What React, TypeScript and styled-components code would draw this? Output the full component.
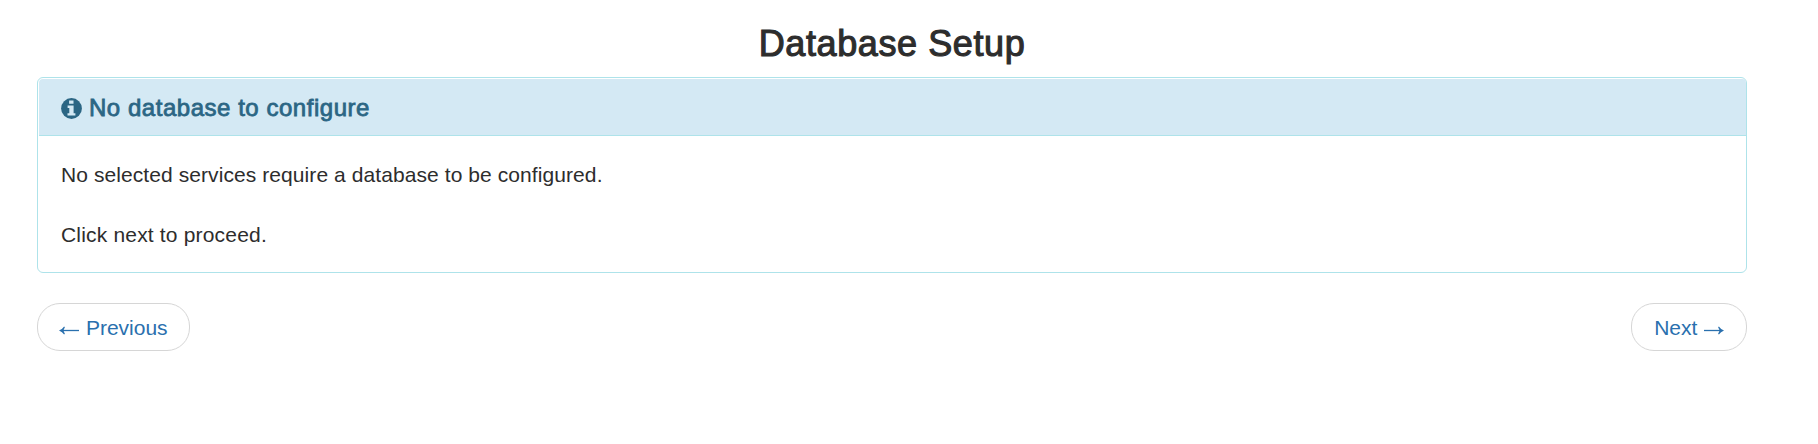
import React from 'react';
import styled, { createGlobalStyle } from 'styled-components';

const GlobalStyle = createGlobalStyle`
  *, *::before, *::after { box-sizing: border-box; }
  body {
    margin: 0;
    background: #fff;
    color: #2d2d2d;
    font-family: "Liberation Sans", Arial, sans-serif;
    font-size: 21px;
    line-height: 30px;
  }
`;

const Page = styled.main`
  padding: 24px 71px 0 37px;
`;

const Title = styled.h3`
  margin: 0 0 13px;
  font-size: 36px;
  font-weight: 400;
  line-height: 40px;
  letter-spacing: 0.6px;
  text-align: center;
  -webkit-text-stroke: 1.1px currentColor;
`;

const Panel = styled.section`
  height: 196px;
  border: 1px solid #aee3ea;
  border-radius: 6px;
  padding-top: 1px;
`;

const PanelHeading = styled.header`
  display: flex;
  align-items: center;
  gap: 7px;
  height: 57px;
  margin-left: 1px;
  padding: 2px 22px 0;
  color: #2b6684;
  background: #d4e9f4;
  border-bottom: 1px solid #aee3ea;
  border-radius: 4px 4px 0 0;
`;

const PanelTitle = styled.h4`
  margin: 0;
  font-size: 24px;
  font-weight: 400;
  line-height: 28px;
  letter-spacing: 0.53px;
  white-space: nowrap;
  -webkit-text-stroke: 0.8px currentColor;
`;

const PanelBody = styled.div`
  padding: 24px 23px 0;
`;

const Paragraph = styled.p<{ $tracking: number }>`
  margin: 0 0 30px;
  letter-spacing: ${({ $tracking }) => $tracking}px;
`;

const Pager = styled.nav`
  display: flex;
  justify-content: space-between;
  margin-top: 30px;
`;

const PagerLink = styled.a<{ $width: number }>`
  display: flex;
  align-items: center;
  justify-content: center;
  gap: 6.5px;
  width: ${({ $width }) => $width}px;
  height: 48px;
  padding-top: 2px;
  border: 1px solid #d6d6d6;
  border-radius: 23px;
  color: #2a70ae;
  white-space: nowrap;
  text-decoration: none;
`;

const ArrowSvg = styled.svg<{ $flip?: boolean }>`
  margin-top: 4px;
  transform: ${({ $flip }) => ($flip ? 'scaleX(-1)' : 'none')};
`;

const Arrow = ({ flip }: { flip?: boolean }) => (
  <ArrowSvg $flip={flip} width="20" height="9" viewBox="0 0 20 9" aria-hidden="true">
    <path d="M2 4.5h18" stroke="currentColor" strokeWidth="1.3" fill="none" />
    <path d="M0 4.5Q3.4 3.1 5.1.4L5.9 1.2Q4.9 3 4.4 4.5Q4.9 6 5.9 7.8L5.1 8.6Q3.4 5.9 0 4.5z" fill="currentColor" />
  </ArrowSvg>
);

const InfoIcon = () => (
  <svg width="21" height="21" viewBox="0 0 21 21" aria-hidden="true">
    <circle cx="10.5" cy="10.5" r="10.4" fill="currentColor" />
    <path d="M8.1 2.5h4.4v3.2H8.1zM6.6 7.6h6v7.6h1.8v2.4H6.5v-2.4h1.8V10H6.6z" fill="#d4e9f4" />
  </svg>
);

export default function App() {
  return (
    <>
      <GlobalStyle />
      <Page>
        <Title>Database Setup</Title>
        <Panel>
          <PanelHeading>
            <InfoIcon />
            <PanelTitle>No database to configure</PanelTitle>
          </PanelHeading>
          <PanelBody>
            <Paragraph $tracking={0.08}>No selected services require a database to be configured.</Paragraph>
            <Paragraph $tracking={0.18}>Click next to proceed.</Paragraph>
          </PanelBody>
        </Panel>
        <Pager>
          <PagerLink href="#" $width={153}><Arrow /><span>Previous</span></PagerLink>
          <PagerLink href="#" $width={116}><span>Next</span><Arrow flip /></PagerLink>
        </Pager>
      </Page>
    </>
  );
}
